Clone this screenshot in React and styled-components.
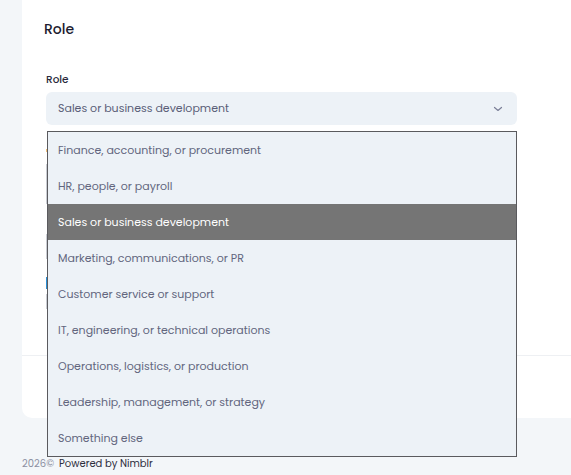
import React from 'react'
import styled, { createGlobalStyle } from 'styled-components'

const roles = [
  'Finance, accounting, or procurement',
  'HR, people, or payroll',
  'Sales or business development',
  'Marketing, communications, or PR',
  'Customer service or support',
  'IT, engineering, or technical operations',
  'Operations, logistics, or production',
  'Leadership, management, or strategy',
  'Something else'
]

const GlobalStyle = createGlobalStyle`
  html, body {
    margin: 0;
    padding: 0;
    background: #f3f6f9;
    font-family: 'Poppins', 'Noto Sans', 'Liberation Sans', sans-serif;
  }
`

const Page = styled.div`
  width: 571px;
  height: 475px;
  overflow: hidden;
  display: flex;
  flex-direction: column;
  padding-left: 22px;
  box-sizing: border-box;
`

const Card = styled.div`
  background: #ffffff;
  border-radius: 0 0 0 10px;
  height: 418px;
  display: flex;
  flex-direction: column;
`

const Body = styled.div`
  flex: 1;
  padding: 18px 0 0 22px;
`

const Heading = styled.h2`
  margin: 0;
  font-size: 14px;
  font-weight: 500;
  color: #1c1c30;
  line-height: 22px;
`

const Form = styled.div`
  margin-top: 33px;
  padding-left: 2px;
  width: 471px;
  position: relative;
`

const Label = styled.div`
  font-size: 10.5px;
  font-weight: 500;
  color: #2a2a3c;
  line-height: 14px;
  margin-bottom: 5px;
`

const Select = styled.div`
  height: 33px;
  border-radius: 6px;
  background: #edf2f7;
  display: flex;
  align-items: center;
  justify-content: space-between;
  padding: 0 12px;
  font-size: 11px;
  color: #5a5e78;
`

const Chevron = styled.svg`
  width: 10px;
  height: 10px;
  margin-right: 2px;
`

const Hint = styled.div`
  margin-top: 24px;
  width: 120px;
  height: 3px;
  border-left: 1px solid #f3c17a;
`

const Field = styled.div`
  margin-top: ${p => p.$gap}px;
  height: ${p => p.$h}px;
  border-left: 1px solid ${p => p.$color};
`

const Popup = styled.ul`
  position: absolute;
  top: 58px;
  left: 3px;
  width: 470px;
  margin: 0;
  padding: 0;
  list-style: none;
  background: #edf2f7;
  border: 1px solid #5a5a5e;
  box-sizing: border-box;
`

const Option = styled.li`
  height: 36px;
  display: flex;
  align-items: center;
  padding-left: 10px;
  font-size: 11px;
  color: ${p => (p.$active ? '#ffffff' : '#62667e')};
  background: ${p => (p.$active ? '#757575' : 'transparent')};
`

const Actions = styled.div`
  height: 62px;
  border-top: 1px solid #eef0f3;
`

const Footer = styled.div`
  display: flex;
  align-items: center;
  gap: 5px;
  margin-top: 39px;
  line-height: 14px;
  font-size: 10px;
`

const Year = styled.span`
  color: #8c90a2;
`

const Powered = styled.span`
  color: #2e2e3e;
`

export default function App() {
  const selected = 'Sales or business development'

  return (
    <Page>
      <GlobalStyle />
      <Card>
        <Body>
          <Heading>Role</Heading>
          <Form>
            <Label>Role</Label>
            <Select>
              <span>{selected}</span>
              <Chevron viewBox="0 0 10 10" fill="none">
                <path d="M1.5 3.5 L5 6.5 L8.5 3.5" stroke="#7c8098" strokeWidth="1.2" strokeLinecap="round" strokeLinejoin="round" />
              </Chevron>
            </Select>
            <Hint />
            <Field $gap={12} $h={40} $color="#c9ccd3" />
            <Field $gap={30} $h={25} $color="#c9ccd3" />
            <Field $gap={18} $h={12} $color="#2b8fd6" />
            <Field $gap={5} $h={15} $color="#c9ccd3" />
            <Popup>
              {roles.map(role => (
                <Option key={role} $active={role === selected}>
                  {role}
                </Option>
              ))}
            </Popup>
          </Form>
        </Body>
        <Actions />
      </Card>
      <Footer>
        <Year>2026©</Year>
        <Powered>Powered by Nimblr</Powered>
      </Footer>
    </Page>
  )
}
